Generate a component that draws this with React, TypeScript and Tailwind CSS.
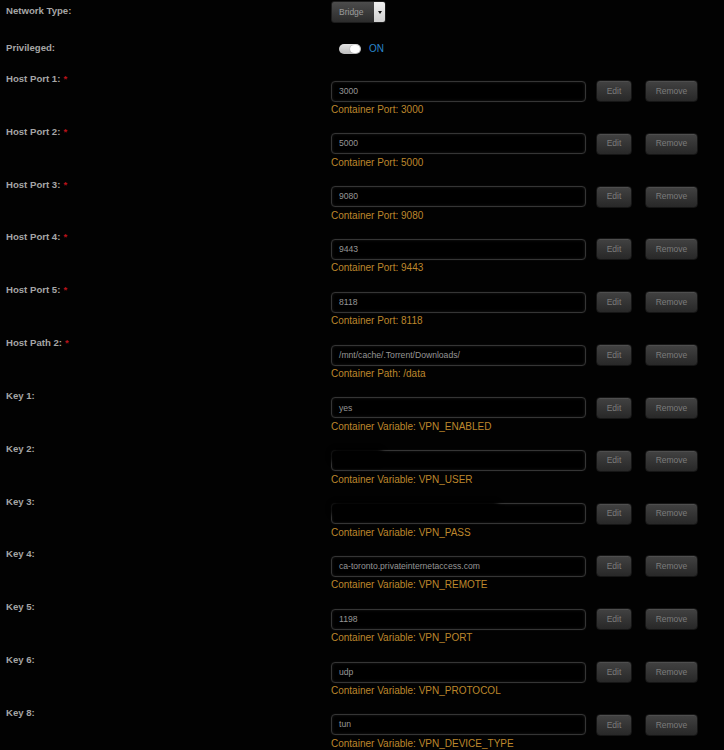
import React from "react";

type Entry = {
  label: string;
  required?: boolean;
  value: string;
  note: string;
  mask?: number;
};

const entries: Entry[] = [
  { label: "Host Port 1:", required: true, value: "3000", note: "Container Port: 3000" },
  { label: "Host Port 2:", required: true, value: "5000", note: "Container Port: 5000" },
  { label: "Host Port 3:", required: true, value: "9080", note: "Container Port: 9080" },
  { label: "Host Port 4:", required: true, value: "9443", note: "Container Port: 9443" },
  { label: "Host Port 5:", required: true, value: "8118", note: "Container Port: 8118" },
  { label: "Host Path 2:", required: true, value: "/mnt/cache/.Torrent/Downloads/", note: "Container Path: /data" },
  { label: "Key 1:", value: "yes", note: "Container Variable: VPN_ENABLED" },
  { label: "Key 2:", value: "", note: "Container Variable: VPN_USER", mask: 54 },
  { label: "Key 3:", value: "", note: "Container Variable: VPN_PASS", mask: 170 },
  { label: "Key 4:", value: "ca-toronto.privateinternetaccess.com", note: "Container Variable: VPN_REMOTE" },
  { label: "Key 5:", value: "1198", note: "Container Variable: VPN_PORT" },
  { label: "Key 6:", value: "udp", note: "Container Variable: VPN_PROTOCOL" },
  { label: "Key 8:", value: "tun", note: "Container Variable: VPN_DEVICE_TYPE" },
];

const font = { fontFamily: '"Liberation Sans", Arial, sans-serif' };

function Label({ text, required }: { text: string; required?: boolean }) {
  return (
    <div className="text-[9.6px] font-bold leading-[14px] text-[#a6a6a6]">
      {text}
      {required && <span className="ml-[3px] text-[#b8121a]">*</span>}
    </div>
  );
}

function DarkButton({ children, w }: { children: React.ReactNode; w: string }) {
  return (
    <div
      className={`flex h-[22px] ${w} items-center justify-center rounded-[4px] border border-[#161616] bg-gradient-to-b from-[#424242] to-[#282828] text-[8.5px] text-[#7c7c7c] shadow-[inset_0_1px_0_rgba(255,255,255,0.07)]`}
    >
      {children}
    </div>
  );
}

function EntryRow({ e }: { e: Entry }) {
  return (
    <div className="flex h-[52.83px]">
      <div className="w-[331px] shrink-0 pl-[6px] pt-[1px]">
        <Label text={e.label} required={e.required} />
      </div>
      <div className="flex flex-col pt-[9px]">
        <div className="flex items-center">
          <div className="relative flex h-[21px] w-[255px] items-center rounded-[4px] border border-[#353535] bg-black pl-[7px] text-[8.6px] text-[#969696] shadow-[inset_0_0_3px_rgba(255,255,255,0.1),0_0_2px_rgba(255,255,255,0.08)]">
            {e.value}
            {e.mask !== undefined && (
              <div
                className="absolute left-[-2px] top-[-3px] h-[16px] rounded-full bg-black blur-[2px]"
                style={{ width: e.mask }}
              />
            )}
          </div>
          <div className="ml-[10px]">
            <DarkButton w="w-[36px]">Edit</DarkButton>
          </div>
          <div className="ml-[13px]">
            <DarkButton w="w-[53px]">Remove</DarkButton>
          </div>
        </div>
        <div className="mt-[1px] text-[10px] leading-[14px] text-[#bd872c]">{e.note}</div>
      </div>
    </div>
  );
}

export default function App() {
  return (
    <div className="h-[750px] w-[724px] overflow-hidden bg-[#020202]" style={font}>
      {/* Network type */}
      <div className="flex h-[37px]">
        <div className="w-[331px] shrink-0 pl-[6px] pt-[4px]">
          <Label text="Network Type:" />
        </div>
        <div className="pt-[1px]">
          <div className="flex h-[22px] w-[55px] overflow-hidden rounded-[3px] border border-[#1c1c1c] bg-gradient-to-b from-[#4c4c4c] to-[#2c2c2c]">
            <div className="flex flex-1 items-center pl-[7px] text-[8.5px] text-[#9c9c9c]">Bridge</div>
            <div className="flex w-[11px] items-center justify-center bg-gradient-to-b from-[#f2f2f2] to-[#cfcfcf]">
              <div className="h-0 w-0 border-x-[2.5px] border-t-[3px] border-x-transparent border-t-[#111]" />
            </div>
          </div>
        </div>
      </div>
      {/* Privileged */}
      <div className="flex h-[34px]">
        <div className="w-[331px] shrink-0 pl-[6px] pt-[4px]">
          <Label text="Privileged:" />
        </div>
        <div className="flex h-[22px] items-center pl-[8px] pt-[1px]">
          <div className="relative h-[10px] w-[22px] rounded-full bg-gradient-to-b from-[#e4e4e4] to-[#bdbdbd]">
            <div className="absolute right-[1px] top-[1px] h-[8px] w-[10px] rounded-full bg-white shadow-[0_0_1px_rgba(0,0,0,0.5)]" />
          </div>
          <span className="ml-[8px] text-[10px] text-[#2a86cc]">ON</span>
        </div>
      </div>
      {entries.map((e) => (
        <EntryRow key={e.label} e={e} />
      ))}
    </div>
  );
}
